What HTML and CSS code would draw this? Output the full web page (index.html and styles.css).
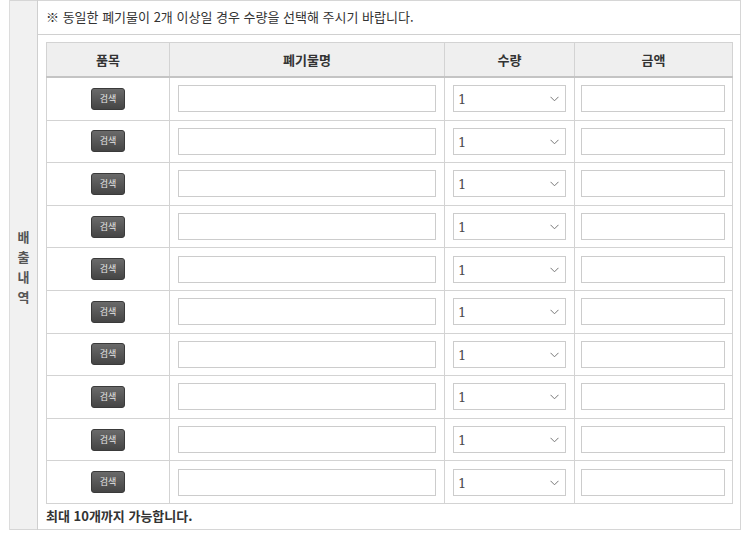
FILE: index.html
```html
<!DOCTYPE html>
<html lang="ko">
<head>
<meta charset="utf-8">
<link rel="stylesheet" href="styles.css">
</head>
<body>
<table class="outer">
  <tr>
    <th class="side" rowspan="2"><span>배</span><span>출</span><span>내</span><span>역</span></th>
    <td class="notice">※ 동일한 폐기물이 2개 이상일 경우 수량을 선택해 주시기 바랍니다.</td>
  </tr>
  <tr>
    <td class="body">
      <table class="items">
        <colgroup><col class="c1"><col class="c2"><col class="c3"><col class="c4"></colgroup>
        <thead>
          <tr><th>품목</th><th>폐기물명</th><th>수량</th><th>금액</th></tr>
        </thead>
        <tbody id="rows"></tbody>
      </table>
      <p class="limit">최대 10개까지 가능합니다.</p>
    </td>
  </tr>
</table>
<template id="row">
  <tr>
    <td><button class="search" type="button">검색</button></td>
    <td><input class="txt" type="text"></td>
    <td><div class="sel"><span class="val">1</span><svg class="chev" width="9" height="6" viewBox="0 0 9 6"><path d="M0.5 0.8 L4.5 4.8 L8.5 0.8" fill="none" stroke="#777" stroke-width="1"/></svg></div></td>
    <td><input class="txt" type="text"></td>
  </tr>
</template>
<script>
  var tb = document.getElementById('rows');
  var tpl = document.getElementById('row');
  for (var i = 0; i < 10; i++) tb.appendChild(tpl.content.cloneNode(true));
</script>
</body>
</html>
```

FILE: styles.css
```css
html, body {
  margin: 0;
  padding: 0;
  background: #fff;
}
body {
  font-family: "Noto Sans CJK KR", "Noto Sans", sans-serif;
  color: #333;
  font-size: 12px;
}
.outer {
  margin-left: 9px;
  width: 732px;
  border-collapse: collapse;
  border-top: 1px solid #d6d6d6;
  border-bottom: 1px solid #d6d6d6;
  border-right: 1px solid #d6d6d6;
}
.side {
  width: 28px;
  padding: 0;
  background: #f1f1f1;
  border-left: 1px solid #dcdcdc;
  border-right: 1px solid #cfcfcf;
  vertical-align: middle;
  color: #555;
  font-weight: bold;
  font-size: 13px;
}
.side span {
  display: block;
  line-height: 20px;
  position: relative;
  top: 2px;
}
.notice {
  height: 32px;
  padding: 0 0 1px 8px;
  border-bottom: 1px solid #d0d0d0;
  vertical-align: middle;
  line-height: 16px;
  font-size: 13px;
  color: #333;
}
.body {
  padding: 7px 7px 0 8px;
  vertical-align: top;
}
.items {
  width: 687px;
  border-collapse: collapse;
  table-layout: fixed;
  border: 1px solid #d3d3d3;
}
.c1 { width: 123px; }
.c2 { width: 275px; }
.c3 { width: 130px; }
.c4 { width: 158px; }
.items th {
  height: 33px;
  padding: 0;
  background: #efefef;
  border-left: 1px solid #d3d3d3;
  border-bottom: 2px solid #c4c4c4;
  font-weight: bold;
  font-size: 13px;
  color: #333;
}
.items td {
  height: 41.6px;
  padding: 0 8px;
  border-left: 1px solid #d3d3d3;
  border-bottom: 1px solid #d3d3d3;
  text-align: center;
  vertical-align: middle;
}
.search {
  display: block;
  margin: 0 auto;
  width: 34px;
  height: 22px;
  padding: 0;
  border: 1px solid #3a3a3a;
  border-radius: 3px;
  background: linear-gradient(#6a6a6a, #454545);
  color: #e6e6e6;
  font-family: "Noto Sans CJK KR", sans-serif;
  font-size: 9px;
  line-height: 20px;
}
.txt {
  display: block;
  box-sizing: border-box;
  width: 100%;
  height: 27px;
  margin: 0;
  border: 1px solid #cccccc;
  background: #fff;
  padding: 0 4px;
}
.items td:nth-child(4) { padding: 0 7px 0 6px; }
.sel {
  position: relative;
  box-sizing: border-box;
  height: 27px;
  border: 1px solid #cccccc;
  background: #fff;
  text-align: left;
}
.val {
  display: block;
  padding: 1px 0 0 4px;
  line-height: 26px;
  font-family: "DejaVu Serif", serif;
  font-size: 13px;
  color: #4a4a4a;
}
.chev {
  position: absolute;
  right: 6px;
  top: 10px;
}
.limit {
  margin: 0;
  height: 25px;
  line-height: 24px;
  font-size: 13px;
  font-weight: bold;
  color: #333;
}
```
